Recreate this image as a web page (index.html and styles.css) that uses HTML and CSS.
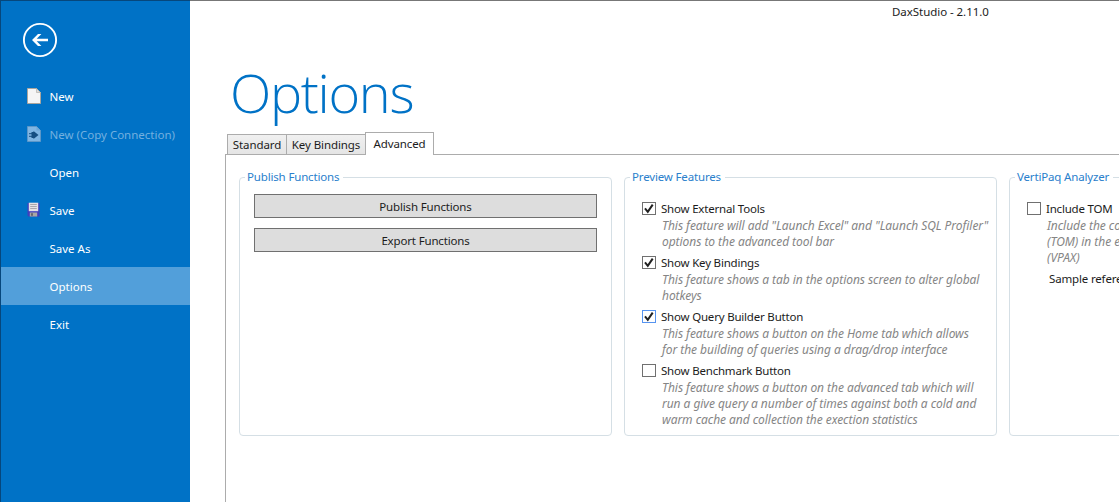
FILE: index.html
```html
<!DOCTYPE html>
<html lang="en">
<head>
<meta charset="utf-8">
<title>DaxStudio - 2.11.0</title>
<link rel="stylesheet" href="styles.css">
</head>
<body>
<div class="window">
  <nav class="sidebar">
    <div class="back">
      <svg width="36" height="36" viewBox="0 0 36 36"><circle cx="18" cy="18" r="16.1" fill="none" stroke="#fff" stroke-width="1.9"/><path d="M10 18l6-6h3.4l-4.7 4.7H26v2.6H14.7l4.7 4.7H16z" fill="#fff"/></svg>
    </div>
    <ul class="menu">
      <li class="item"><span class="icon"><svg width="14" height="16" viewBox="0 0 14 16"><path d="M.5.5h9l4 4v11H.5z" fill="#f5f5f5" stroke="#aaa59d"/><path d="M9.500.5v4h4z" fill="#ddd" stroke="#b5b1aa" stroke-width=".7"/></svg></span><span>New</span></li>
      <li class="item disabled"><span class="icon"><svg width="14" height="16" viewBox="0 0 14 16"><path d="M.5.5h9l4 4v11H.5z" fill="#80b6e3" stroke="#5c97c8"/><path d="M9.500.5v4h4z" fill="#6da8d9"/><path d="M4.500 6h2V5l5 4-5 4v-1h-2z" fill="#164f82"/><path d="M2 7.700h3M2 10.300h3" stroke="#164f82"/></svg></span><span>New (Copy Connection)</span></li>
      <li class="item"><span class="icon"></span><span>Open</span></li>
      <li class="item"><span class="icon"><svg width="14" height="16" viewBox="0 0 14 16"><path d="M.5 1h12v13.500H1.500l-1-1z" fill="#403ebd"/><path d="M1.800.7h9.400v8.500H1.800z" fill="#e4e1e6"/><path d="M3.200 2.500h6.600M3.200 4.500h6.600M3.200 6.500h6.600" stroke="#aaa6ac"/><path d="M2.800 10.500h7.400v4H2.800z" fill="#a8a7a5"/><path d="M4 11.300h2v2.500H4z" fill="#666472"/></svg></span><span>Save</span></li>
      <li class="item"><span class="icon"></span><span>Save As</span></li>
      <li class="item selected"><span class="icon"></span><span>Options</span></li>
      <li class="item"><span class="icon"></span><span>Exit</span></li>
    </ul>
  </nav>
  <main class="main">
    <header class="titlebar">DaxStudio - 2.11.0</header>
    <h1 class="heading">Options</h1>
    <div class="tabs">
      <div class="tab tab-standard">Standard</div>
      <div class="tab tab-keys">Key Bindings</div>
      <div class="tab active">Advanced</div>
    </div>
    <section class="panel">
      <fieldset class="group">
        <legend>Publish Functions</legend>
        <div class="buttons">
          <button class="btn">Publish Functions</button>
          <button class="btn">Export Functions</button>
        </div>
      </fieldset>
      <fieldset class="group">
        <legend>Preview Features</legend>
        <div class="features">
          <div class="feature">
            <label class="check"><span class="box"><svg viewBox="0 0 14 13"><path d="M3 6.300l2.800 3.500L10.700 2.600" /></svg></span><span>Show External Tools</span></label>
            <p class="desc">This feature will add "Launch Excel" and "Launch SQL Profiler"<br>options to the advanced tool bar</p>
          </div>
          <div class="feature">
            <label class="check"><span class="box"><svg viewBox="0 0 14 13"><path d="M3 6.300l2.800 3.500L10.700 2.600" /></svg></span><span>Show Key Bindings</span></label>
            <p class="desc">This feature shows a tab in the options screen to alter global<br>hotkeys</p>
          </div>
          <div class="feature">
            <label class="check"><span class="box focus"><svg viewBox="0 0 14 13"><path d="M3 6.300l2.800 3.500L10.700 2.600" /></svg></span><span>Show Query Builder Button</span></label>
            <p class="desc">This feature shows a button on the Home tab which allows<br>for the building of queries using a drag/drop interface</p>
          </div>
          <div class="feature">
            <label class="check"><span class="box"></span><span>Show Benchmark Button</span></label>
            <p class="desc">This feature shows a button on the advanced tab which will<br>run a give query a number of times against both a cold and<br>warm cache and collection the exection statistics</p>
          </div>
        </div>
      </fieldset>
      <fieldset class="group">
        <legend>VertiPaq Analyzer</legend>
        <div class="features">
          <div class="feature">
            <label class="check"><span class="box"></span><span>Include TOM</span></label>
            <p class="desc">Include the co<br>(TOM) in the e<br>(VPAX)</p>
          </div>
          <div class="sample">Sample refere</div>
        </div>
      </fieldset>
    </section>
  </main>
</div>
</body>
</html>
```
FILE: styles.css
```css
* { box-sizing: border-box; }

body {
  margin: 0;
  overflow: hidden;
  background: #fff;
  color: #1c1c1c;
  font-family: "Noto Sans", "Open Sans", sans-serif;
  font-size: 11.5px;
  letter-spacing: -0.16px;
  line-height: 16px;
}

.window {
  display: flex;
  width: 1119px;
  height: 502px;
  overflow: hidden;
}

.sidebar {
  flex: none;
  width: 190px;
  border-top: 1px solid #06477c;
  border-left: 1px solid #06477c;
  background: #0072c6;
  color: #fff;
  letter-spacing: 0;
}

.back {
  height: 76px;
  padding: 21px 0 0 21px;
}

.back svg, .icon svg { display: block; }

.menu {
  margin: 0;
  padding: 0;
  list-style: none;
}

.item {
  display: flex;
  align-items: center;
  height: 38px;
  padding: 2px 0 0 26px;
  white-space: nowrap;
}

.icon {
  flex: none;
  width: 22.5px;
  height: 18px;
}

.disabled { color: #74b0df; }
.selected { background: #529fda; }

.main {
  flex: none;
  width: 929px;
  border-top: 1px solid #777;
}

.titlebar {
  height: 61px;
  padding: 3px 0 0 702px;
  letter-spacing: -0.05px;
}

.heading {
  height: 70px;
  margin: 0;
  padding-left: 40px;
  color: #0072c6;
  font-family: "Open Sans", sans-serif;
  font-size: 54px;
  font-weight: 300;
  letter-spacing: -1.3px;
  line-height: 60px;
}

.tabs {
  display: flex;
  align-items: flex-end;
  height: 23px;
  padding-left: 37px;
  letter-spacing: -0.1px;
}

.tab {
  height: 21px;
  border: 1px solid #acacac;
  background: linear-gradient(#f0f0f0, #e5e5e5);
  line-height: 20px;
  text-align: center;
  white-space: nowrap;
}

.tab-standard { width: 60px; }
.tab-keys { width: 79px; border-left: 0; }

.tab.active {
  position: relative;
  width: 69px;
  height: 23px;
  margin-left: -1px;
  border-bottom: 0;
  background: #fff;
  line-height: 22px;
}

.panel {
  display: flex;
  gap: 12px;
  width: 960px;
  height: 348px;
  margin: -1px 0 0 35px;
  padding: 14px 0 0 13px;
  border-top: 1px solid #acacac;
  border-left: 1px solid #acacac;
}

.group {
  flex: none;
  width: 373px;
  height: 267px;
  margin: 0;
  padding: 0;
  border: 1px solid #d5dfe5;
  border-radius: 4px;
}

.group legend {
  height: 16px;
  margin-left: 5px;
  padding: 0 4px 0 2px;
  color: #2a80cc;
}

.buttons {
  display: flex;
  flex-direction: column;
  gap: 10px;
  padding: 9px 14px 0;
}

.btn {
  height: 24px;
  padding: 1px 0 0;
  border: 1px solid #707070;
  background: #ddd;
  color: inherit;
  font: inherit;
  letter-spacing: inherit;
}

.features { padding: 16px 0 0 17px; }
.feature { margin-bottom: 6px; }

.check {
  display: flex;
  gap: 5px;
  height: 16px;
  letter-spacing: -0.2px;
  white-space: nowrap;
}

.box {
  flex: none;
  width: 14px;
  height: 13px;
  margin-top: 1px;
  border: 1px solid #707070;
  background: #fff;
}

.box svg {
  display: block;
  width: 14px;
  height: 13px;
  margin: -1px;
}

.box path {
  fill: none;
  stroke: #212121;
  stroke-width: 2;
}

.focus { border-color: #5694f0; }

.desc {
  margin: 1px 0 -1px;
  padding-left: 20px;
  color: #858585;
  font-size: 12px;
  font-style: italic;
  letter-spacing: -0.05px;
  white-space: nowrap;
}

.sample {
  margin-top: -1px;
  padding-left: 22px;
  white-space: nowrap;
}
```
